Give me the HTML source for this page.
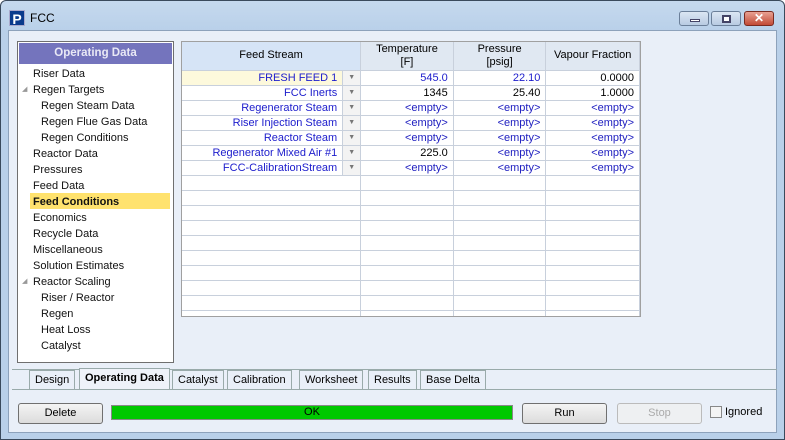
<!DOCTYPE html>
<html><head><style>
*{box-sizing:border-box;margin:0;padding:0}
body{width:785px;height:440px;overflow:hidden;font-family:"Liberation Sans",sans-serif;font-size:11px;background:#fff;position:relative}
.frame{position:absolute;left:0;top:0;width:785px;height:440px;border:1px solid #3a4a5c;border-radius:6px 6px 0 0;background:linear-gradient(#c5d9ee,#b9d0e9 30px);}
.content{position:absolute;left:8px;top:30px;width:769px;height:403px;background:#e9eff8;border:1px solid #8da2bb}
.abs{position:absolute}
.nav{left:17px;top:41px;width:157px;height:322px;background:#fff;border:1px solid #6f6f6f}
.navh{position:absolute;left:1px;top:1px;width:153px;height:21px;background:#7474bd;color:#e9e9f5;font-weight:bold;text-align:center;line-height:21px;font-size:11.5px}
.ni{position:absolute;height:16px;line-height:16px;font-size:11px;color:#111}
.grid{left:181px;top:41px;width:460px;height:276px;background:#fff;border:1px solid #a0a0a0;overflow:hidden}
table{border-collapse:collapse;position:absolute;left:0;top:0}
td{border-right:1px solid #c8d0dc;border-bottom:1px solid #c8d0dc;height:15px;padding:0 5px;text-align:right;font-size:11px;white-space:nowrap}
th{font-weight:normal;background:#e0e8f2;border-right:1px solid #c8d0dc;border-bottom:1px solid #c8d0dc;height:28px;font-size:11px;line-height:13px}
.b{color:#1c1ccc}.e{color:#2020c0}
.dd{padding:0;width:18px;background:#f3f3f3;text-align:center;color:#777;font-size:7px}
.tab{position:absolute;top:370px;height:19px;line-height:18px;border:1px solid #9aa;border-bottom:none;padding:0 5px;font-size:11px;background:#e9eff8}
.btn{position:absolute;top:403px;height:21px;border:1px solid #707070;border-radius:3px;background:linear-gradient(#f4f4f4,#dcdcdc);text-align:center;line-height:19px;font-size:11px}
.wb{position:absolute;top:11px;height:15px;border:1px solid #6b7f99;border-radius:3px;background:linear-gradient(#dbe6f3,#b8cbe2)}
</style></head><body>
<div class="frame"></div>
<div class="abs" style="left:9px;top:10px;width:16px;height:16px;background:#0a3a8c;color:#fff;font-weight:bold;font-size:14px;line-height:16px;text-align:center;border:1px solid #aac">P</div>
<div class="abs" style="left:30px;top:10px;font-size:12px;line-height:16px">FCC</div>
<div class="wb" style="left:679px;width:30px"><div class="abs" style="left:10px;top:7px;width:10px;height:3px;background:#fff;border:1px solid #446"></div></div>
<div class="wb" style="left:711px;width:30px"><div class="abs" style="left:10px;top:3px;width:9px;height:8px;border:2px solid #446;background:#fff"></div></div>
<div class="wb" style="left:744px;width:30px;background:linear-gradient(#e8a193,#c24a36);border-color:#7a2a20;color:#fff;text-align:center;font-weight:bold;font-size:12px;line-height:13px">✕</div>
<div class="content"></div>
<div class="abs nav">
<div class="navh">Operating Data</div>
<div class="abs" style="left:12px;top:151px;width:140px;height:16px;background:#ffe26e"></div>
<div class="ni" style="left:15px;top:24px">Riser Data</div>
<div class="ni" style="left:4px;top:40px;color:#999;font-size:7px">◢</div>
<div class="ni" style="left:15px;top:40px">Regen Targets</div>
<div class="ni" style="left:23px;top:56px">Regen Steam Data</div>
<div class="ni" style="left:23px;top:72px">Regen Flue Gas Data</div>
<div class="ni" style="left:23px;top:88px">Regen Conditions</div>
<div class="ni" style="left:15px;top:104px">Reactor Data</div>
<div class="ni" style="left:15px;top:120px">Pressures</div>
<div class="ni" style="left:15px;top:136px">Feed Data</div>
<div class="ni" style="left:15px;top:152px;font-weight:bold">Feed Conditions</div>
<div class="ni" style="left:15px;top:168px">Economics</div>
<div class="ni" style="left:15px;top:184px">Recycle Data</div>
<div class="ni" style="left:15px;top:200px">Miscellaneous</div>
<div class="ni" style="left:15px;top:216px">Solution Estimates</div>
<div class="ni" style="left:4px;top:232px;color:#999;font-size:7px">◢</div>
<div class="ni" style="left:15px;top:232px">Reactor Scaling</div>
<div class="ni" style="left:23px;top:248px">Riser / Reactor</div>
<div class="ni" style="left:23px;top:264px">Regen</div>
<div class="ni" style="left:23px;top:280px">Heat Loss</div>
<div class="ni" style="left:23px;top:296px">Catalyst</div>
</div>
<div class="abs grid"><table>
<tr><th colspan="2" style="width:179px;background:#d6e4f6">Feed Stream</th><th style="width:93px">Temperature<br>[F]</th><th style="width:93px">Pressure<br>[psig]</th><th style="width:94px">Vapour Fraction</th></tr>
<tr><td class="b" style="width:161px;background:#fdf9dc">FRESH FEED 1</td><td class="dd">▼</td><td class="b">545.0</td><td class="b">22.10</td><td>0.0000</td></tr>
<tr><td class="b">FCC Inerts</td><td class="dd">▼</td><td>1345</td><td>25.40</td><td>1.0000</td></tr>
<tr><td class="b">Regenerator Steam</td><td class="dd">▼</td><td class="e">&lt;empty&gt;</td><td class="e">&lt;empty&gt;</td><td class="e">&lt;empty&gt;</td></tr>
<tr><td class="b">Riser Injection Steam</td><td class="dd">▼</td><td class="e">&lt;empty&gt;</td><td class="e">&lt;empty&gt;</td><td class="e">&lt;empty&gt;</td></tr>
<tr><td class="b">Reactor Steam</td><td class="dd">▼</td><td class="e">&lt;empty&gt;</td><td class="e">&lt;empty&gt;</td><td class="e">&lt;empty&gt;</td></tr>
<tr><td class="b">Regenerator Mixed Air #1</td><td class="dd">▼</td><td>225.0</td><td class="e">&lt;empty&gt;</td><td class="e">&lt;empty&gt;</td></tr>
<tr><td class="b">FCC-CalibrationStream</td><td class="dd">▼</td><td class="e">&lt;empty&gt;</td><td class="e">&lt;empty&gt;</td><td class="e">&lt;empty&gt;</td></tr>
<tr><td colspan="2"></td><td></td><td></td><td></td></tr>
<tr><td colspan="2"></td><td></td><td></td><td></td></tr>
<tr><td colspan="2"></td><td></td><td></td><td></td></tr>
<tr><td colspan="2"></td><td></td><td></td><td></td></tr>
<tr><td colspan="2"></td><td></td><td></td><td></td></tr>
<tr><td colspan="2"></td><td></td><td></td><td></td></tr>
<tr><td colspan="2"></td><td></td><td></td><td></td></tr>
<tr><td colspan="2"></td><td></td><td></td><td></td></tr>
<tr><td colspan="2"></td><td></td><td></td><td></td></tr>
<tr><td colspan="2"></td><td></td><td></td><td></td></tr>
<tr><td colspan="2"></td><td></td><td></td><td></td></tr>
</table></div>
<div class="abs" style="left:12px;top:369px;width:765px;height:1px;background:#9aa"></div>
<div class="tab" style="left:29px">Design</div>
<div class="tab" style="left:79px;top:368px;height:22px;background:#eef2f9;font-weight:bold">Operating Data</div>
<div class="tab" style="left:172px">Catalyst</div>
<div class="tab" style="left:227px">Calibration</div>
<div class="tab" style="left:299px">Worksheet</div>
<div class="tab" style="left:368px">Results</div>
<div class="tab" style="left:420px">Base Delta</div>
<div class="abs" style="left:12px;top:389px;width:765px;height:1px;background:#9aa"></div>
<div class="btn" style="left:18px;width:85px">Delete</div>
<div class="abs" style="left:111px;top:405px;width:402px;height:15px;background:#00c800;border:1px solid #888;text-align:center;line-height:13px;font-size:11px">OK</div>
<div class="btn" style="left:522px;width:85px">Run</div>
<div class="btn" style="left:617px;width:85px;color:#aaa;border-color:#bbb;background:#eef0f2">Stop</div>
<div class="abs" style="left:710px;top:406px;width:12px;height:12px;border:1px solid #888;background:#f4f4f4"></div>
<div class="abs" style="left:725px;top:406px;font-size:11px">Ignored</div>
</body></html>
